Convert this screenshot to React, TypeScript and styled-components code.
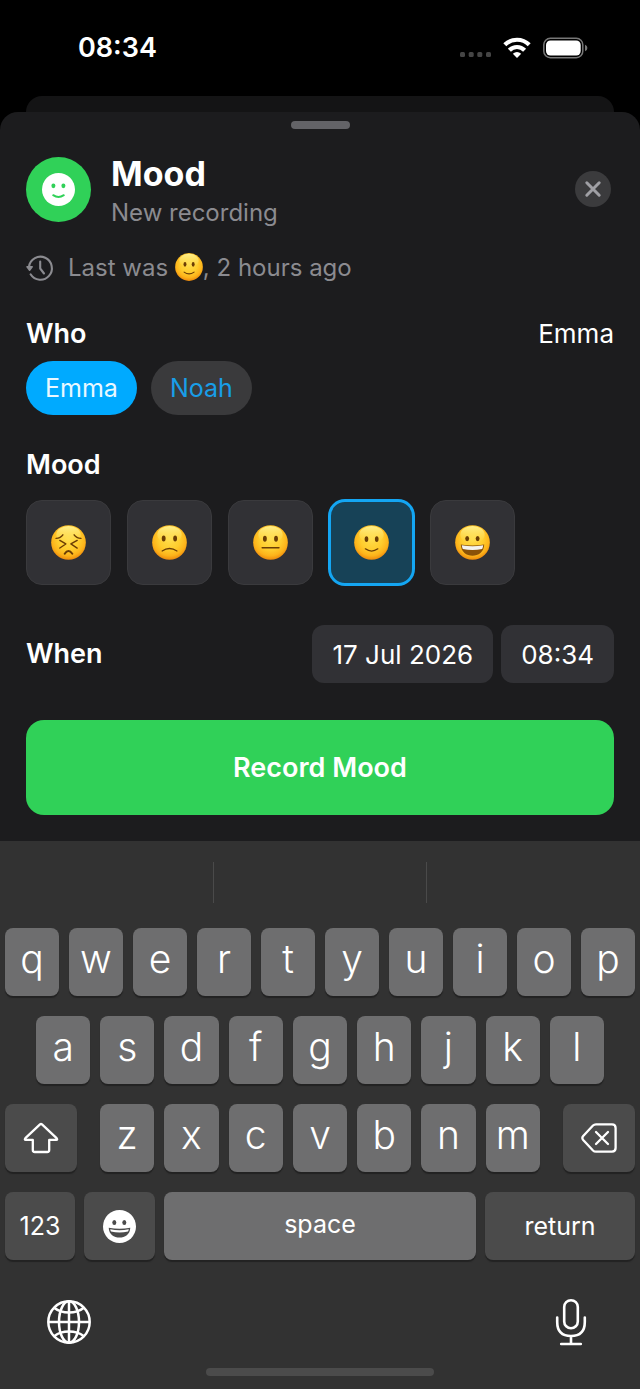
import React, {useId, useState} from "react";
import styled, {createGlobalStyle} from "styled-components";

type MoodId = "awful" | "sad" | "neutral" | "happy" | "great";

const moods: { id: MoodId; label: string }[] = [
    {id: "awful", label: "Awful"},
    {id: "sad", label: "Sad"},
    {id: "neutral", label: "Neutral"},
    {id: "happy", label: "Happy"},
    {id: "great", label: "Great"},
];

const people = ["Emma", "Noah"];

const faces: Record<MoodId, React.ReactNode> = {
    awful: (
        <g fill="none" stroke="#6b3d05" strokeWidth="1.4" strokeLinecap="round" strokeLinejoin="round">
            <path d="M5 13.2Q9.500 13 11.700 9.700M29.500 13.200Q25 13 22.800 9.700"/>
            <path d="M8.700 15.200L14.600 18.700L8.700 22.700M25.800 15.200L19.600 18.700L25.800 22.700"/>
            <path d="M13.500 28.300Q17.200 22.800 21 28.300" strokeWidth="2"/>
        </g>
    ),
    sad: (
        <>
            <ellipse cx="11.500" cy="13.300" rx="1.900" ry="3" fill="#6b3d05"/>
            <ellipse cx="22.800" cy="13.300" rx="1.900" ry="3" fill="#6b3d05"/>
            <path d="M10 25.600Q17.200 20.800 24.600 25.600" fill="none" stroke="#6b3d05" strokeWidth="1.300" strokeLinecap="round"/>
        </>
    ),
    neutral: (
        <>
            <ellipse cx="11.700" cy="13.500" rx="1.900" ry="3" fill="#6b3d05"/>
            <ellipse cx="22.700" cy="13.500" rx="1.900" ry="3" fill="#6b3d05"/>
            <path d="M9 22.400H25.600" stroke="#6b3d05" strokeWidth="1.400" strokeLinecap="round"/>
        </>
    ),
    happy: (
        <>
            <ellipse cx="12.300" cy="13.900" rx="1.800" ry="2.900" fill="#6b3d05"/>
            <ellipse cx="22.400" cy="13.900" rx="1.800" ry="2.900" fill="#6b3d05"/>
            <path d="M11.200 23.500Q17.300 28 23.500 23.500" fill="none" stroke="#6b3d05" strokeWidth="1.300" strokeLinecap="round"/>
        </>
    ),
    great: (
        <>
            <ellipse cx="12" cy="13.400" rx="1.900" ry="2.500" fill="#6b3d05"/>
            <ellipse cx="22.300" cy="13.400" rx="1.900" ry="2.500" fill="#6b3d05"/>
            <path d="M5.700 19.200Q17.200 21.200 28.800 19.200C28.600 26.500 23 30.300 17.200 30.300S5.900 26.500 5.700 19.200Z" fill="#8a5208"/>
            <path d="M6.700 20Q17.200 22 27.800 20Q27.600 22.300 26.800 23.700Q17.200 25.800 7.700 23.700Q6.900 22.300 6.700 20Z" fill="#f4f3ee"/>
        </>
    ),
};

const Emoji = ({mood, size}: { mood: MoodId; size: number }) => {
    const id = useId();
    return (
        <svg width={size} height={size} viewBox="0 0 34.500 34.500" aria-hidden="true">
            <defs>
                <radialGradient id={id} cx="0.500" cy="0.400" r="0.620">
                    <stop offset="0" stopColor="#ffdc4a"/>
                    <stop offset="0.500" stopColor="#ffcd2e"/>
                    <stop offset="0.780" stopColor="#fdb31a"/>
                    <stop offset="1" stopColor="#ea820a"/>
                </radialGradient>
                <linearGradient id={id + "top"} x1="0" y1="0" x2="0" y2="1">
                    <stop offset="0" stopColor="#fff08c"/>
                    <stop offset="1" stopColor="#ffe562" stopOpacity="0"/>
                </linearGradient>
            </defs>
            <circle cx="17.250" cy="17.250" r="17.100" fill={`url(#${id})`}/>
            <ellipse cx="17.250" cy="9.500" rx="12" ry="8.500" fill={`url(#${id}top)`}/>
            {faces[mood]}
        </svg>
    );
};

export default function App() {
    const [person, setPerson] = useState("Emma");
    const [mood, setMood] = useState<MoodId>("happy");

    return (
        <Screen>
            <GlobalStyle/>
            <StatusBar>
                <Clock>08:34</Clock>
                <StatusIcons/>
            </StatusBar>
            <BackCard/>
            <Sheet>
                <Grabber/>
                <Header>
                    <Badge>
                        <svg width="33" height="33" viewBox="0 0 33 33" aria-hidden="true">
                            <circle cx="16.500" cy="16.500" r="16.500" fill="#fff"/>
                            <ellipse cx="11.400" cy="12.800" rx="2" ry="2.400" fill="#30d158"/>
                            <ellipse cx="21.400" cy="12.800" rx="2" ry="2.400" fill="#30d158"/>
                            <path d="M11.200 22.200Q16.500 25.800 21.800 22.200" fill="none" stroke="#30d158" strokeWidth="2" strokeLinecap="round"/>
                        </svg>
                    </Badge>
                    <Heading>
                        <Title>Mood</Title>
                        <Subtitle>New recording</Subtitle>
                    </Heading>
                    <CloseButton aria-label="Close">
                        <svg width="36" height="36" viewBox="0 0 36 36" aria-hidden="true">
                            <circle cx="18" cy="18" r="18" fill="#3b3b3d"/>
                            <path d="M11.800 11.800L24.200 24.200M24.200 11.800L11.800 24.200" stroke="#a0a0a5" strokeWidth="3" strokeLinecap="round"/>
                        </svg>
                    </CloseButton>
                </Header>

                <LastEntry>
                    <svg width="28" height="28" viewBox="0 0 28 28" fill="none" stroke="#8b8b90" strokeWidth="2.100" strokeLinecap="round" strokeLinejoin="round" aria-hidden="true">
                        <path d="M3 12.600A11.500 11.500 0 1 1 4.600 20.300"/>
                        <path d="M14.200 7.600V14.500L18 19.500"/>
                        <path d="M1 12.800H6.200L3.600 16.200Z" fill="#8b8b90" strokeWidth="1.500"/>
                    </svg>
                    <LastText>Last was <Emoji mood="happy" size={28}/>, 2 hours ago</LastText>
                </LastEntry>

                <FieldHead>
                    <Label>Who</Label>
                    <Value>{person}</Value>
                </FieldHead>
                <Chips>
                    {people.map((name) => (
                        <Chip key={name} $active={name === person} aria-pressed={name === person} onClick={() => setPerson(name)}>
                            {name}
                        </Chip>
                    ))}
                </Chips>

                <MoodField>
                    <Legend>Mood</Legend>
                    <Tiles>
                        {moods.map(({id, label}) => (
                            <Tile key={id} $active={id === mood}>
                                <HiddenRadio type="radio" name="mood" aria-label={label} checked={id === mood} onChange={() => setMood(id)}/>
                                <Emoji mood={id} size={35}/>
                            </Tile>
                        ))}
                    </Tiles>
                </MoodField>

                <WhenRow>
                    <Label>When</Label>
                    <Pickers>
                        <Picker>17 Jul 2026</Picker>
                        <Picker>08:34</Picker>
                    </Pickers>
                </WhenRow>

                <RecordButton>Record Mood</RecordButton>
            </Sheet>
            <Keyboard/>
        </Screen>
    );
}

const StatusIcons = () => {
    return (
        <svg width="128" height="22" viewBox="0 0 128 22" aria-hidden="true">
            <g fill="#454545">
                <rect x="0" y="15" width="5" height="5" rx="1.500"/>
                <rect x="8.700" y="15" width="5" height="5" rx="1.500"/>
                <rect x="17.300" y="15" width="5" height="5" rx="1.500"/>
                <rect x="26" y="15" width="5" height="5" rx="1.500"/>
            </g>
            <g fill="none" stroke="#fff" strokeWidth="4.200">
                <path d="M44.800 7.800A17.300 17.300 0 0 1 69.200 7.800"/>
                <path d="M49.400 13.200A10.600 10.600 0 0 1 64.600 13.200"/>
            </g>
            <path d="M52.800 16.700Q57 13.300 61.200 16.700L57 21Z" fill="#fff"/>
            <rect x="83.800" y="1.300" width="39" height="19.400" rx="6.500" fill="none" stroke="#777" strokeWidth="1.500"/>
            <rect x="86" y="3.500" width="34.700" height="15" rx="4.500" fill="#fff"/>
            <path d="M125 7.800Q127.400 8.800 127.400 11T125 14.200Z" fill="#777"/>
        </svg>
    );
};

const Keyboard = () => {
    return (
        <KeyboardPanel>
            <Suggestions>
                <Suggestion/>
                <Suggestion/>
                <Suggestion/>
            </Suggestions>
            <KeyRows>
                <KeyRow>
                    {"qwertyuiop".split("").map((letter) => <LetterKey key={letter}>{letter}</LetterKey>)}
                </KeyRow>
                <KeyRow $inset>
                    {"asdfghjkl".split("").map((letter) => <LetterKey key={letter}>{letter}</LetterKey>)}
                </KeyRow>
                <ShiftRow>
                    <ActionKey aria-label="Shift">
                        <svg width="36" height="32" viewBox="0 0 36 32" fill="none" stroke="#fff" strokeWidth="2.300" strokeLinejoin="round" aria-hidden="true">
                            <path d="M17 2.400Q18 1.500 19 2.400L33.600 16.200Q34.800 17.700 33.200 17.900H26.200V28Q26.200 30 24.200 30H11.800Q9.800 30 9.800 28V17.900H2.800Q1.200 17.700 2.400 16.200Z"/>
                        </svg>
                    </ActionKey>
                    <LetterGroup>
                        {"zxcvbnm".split("").map((letter) => <LetterKey key={letter}>{letter}</LetterKey>)}
                    </LetterGroup>
                    <ActionKey aria-label="Delete">
                        <svg width="36" height="30" viewBox="0 0 36 30" fill="none" stroke="#fff" strokeWidth="2.300" strokeLinecap="round" strokeLinejoin="round" aria-hidden="true">
                            <path d="M15 1.300H31Q34.600 1.300 34.600 4.900V25.100Q34.600 28.700 31 28.700H15Q13.200 28.700 12 27.500L2.200 17Q0.500 15 2.200 13L12 2.500Q13.200 1.300 15 1.300Z"/>
                            <path d="M15 9L27 21M27 9L15 21"/>
                        </svg>
                    </ActionKey>
                </ShiftRow>
                <SpaceRow>
                    <ActionKey>123</ActionKey>
                    <ActionKey aria-label="Emoji">
                        <svg width="33" height="33" viewBox="0 0 33 33" aria-hidden="true">
                            <circle cx="16.500" cy="16.500" r="16.500" fill="#fff"/>
                            <ellipse cx="11.300" cy="12.400" rx="2" ry="2.500" fill="#4b4b4b"/>
                            <ellipse cx="21.300" cy="12.400" rx="2" ry="2.500" fill="#4b4b4b"/>
                            <path d="M5.700 17.700Q16.500 19.700 27.300 17.700C27 24.500 22 27.500 16.500 27.500S6 24.500 5.700 17.700Z" fill="#4b4b4b"/>
                            <path d="M7.200 19.300Q16.500 21 25.800 19.300Q25.600 20.600 25 21.600Q16.500 23.500 8 21.600Q7.400 20.600 7.200 19.300Z" fill="#fff"/>
                        </svg>
                    </ActionKey>
                    <SpaceKey>space</SpaceKey>
                    <ActionKey>return</ActionKey>
                </SpaceRow>
            </KeyRows>
            <KeyboardFooter>
                <FooterButton aria-label="Next keyboard">
                    <svg width="44" height="44" viewBox="0 0 44 44" fill="none" stroke="#fff" strokeWidth="2.500" aria-hidden="true">
                        <circle cx="22" cy="22" r="20.700"/>
                        <ellipse cx="22" cy="22" rx="10" ry="20.700"/>
                        <path d="M22 1.200V42.800M1.200 22H42.800"/>
                        <path d="M7.500 8Q13 12.500 22 12.500T36.500 8M7.500 36Q13 31.500 22 31.500T36.500 36"/>
                    </svg>
                </FooterButton>
                <FooterButton aria-label="Dictate">
                    <svg width="32" height="48" viewBox="0 0 32 48" fill="none" stroke="#fff" strokeWidth="2.600" strokeLinecap="round" aria-hidden="true">
                        <rect x="9.200" y="2.200" width="13.600" height="28" rx="6.800"/>
                        <path d="M2.200 19.500V24Q2.200 38 16 38T29.800 24V19.500M16 38V46M6.200 46H25.800"/>
                    </svg>
                </FooterButton>
            </KeyboardFooter>
            <HomeBar/>
        </KeyboardPanel>
    );
};

const GlobalStyle = createGlobalStyle`
  * {
    box-sizing: border-box;
  }

  body {
    margin: 0;
    background: #000;
    color: #fff;
    font-family: Inter, "Liberation Sans", sans-serif;
  }

  button {
    border: none;
    padding: 0;
    margin: 0;
    background: none;
    color: inherit;
    font-family: inherit;
    cursor: pointer;
  }

  svg {
    flex: none;
  }
`
const Screen = styled.div`
  display: flex;
  flex-direction: column;
  min-height: 100vh;
`
const StatusBar = styled.header`
  display: flex;
  align-items: center;
  justify-content: space-between;
  height: 96px;
  padding: 0 52px 0 78px;
`
const Clock = styled.span`
  font-size: 27px;
  line-height: 32px;
  font-weight: 600;
`
const BackCard = styled.div`
  height: 16px;
  margin: 0 26px;
  border-radius: 16px 16px 0 0;
  background: #141415;
`
const Sheet = styled.main`
  display: flex;
  flex-direction: column;
  padding: 9px 26px 26px;
  border-radius: 18px 18px 0 0;
  background: #1c1c1e;
`
const Grabber = styled.div`
  align-self: center;
  width: 59px;
  height: 8px;
  border-radius: 4px;
  background: #636367;
`
const Header = styled.div`
  display: flex;
  align-items: center;
  gap: 20px;
  margin-top: 21px;
`
const Badge = styled.div`
  display: flex;
  align-items: center;
  justify-content: center;
  width: 65px;
  height: 65px;
  border-radius: 50%;
  background: #30d158;
`
const Heading = styled.div`
  flex: 1;
`
const Title = styled.h1`
  margin: 0;
  font-size: 34px;
  line-height: 48px;
  font-weight: 700;
`
const Subtitle = styled.p`
  margin: 0;
  color: #8b8b90;
  font-size: 24px;
  line-height: 30px;
`
const CloseButton = styled.button`
  display: flex;
  justify-content: center;
  width: 42px;
`
const LastEntry = styled.div`
  display: flex;
  align-items: center;
  gap: 14px;
  margin-top: 20px;
  color: #8b8b90;
`
const LastText = styled.p`
  margin: 0;
  font-size: 24px;
  line-height: 40px;

  svg {
    vertical-align: -5px;
  }
`
const FieldHead = styled.div`
  display: flex;
  align-items: center;
  justify-content: space-between;
  margin-top: 28px;
`
const Label = styled.span`
  font-size: 27px;
  line-height: 36px;
  font-weight: 600;
`
const Value = styled.span`
  font-size: 26px;
  line-height: 36px;
`
const Chips = styled.div`
  display: flex;
  gap: 14px;
  margin-top: 9px;
`
const Chip = styled.button<{ $active: boolean }>`
  height: 54px;
  padding: 0 19px;
  border-radius: 27px;
  font-size: 25px;
  background: ${({$active}) => ($active ? "#00aaff" : "#3a3a3c")};
  color: ${({$active}) => ($active ? "#e9f8ff" : "#189ee8")};
`
const MoodField = styled.fieldset`
  margin: 32px 0 0;
  padding: 0;
  border: none;
`
const Legend = styled.legend`
  padding: 0;
  font-size: 27px;
  line-height: 36px;
  font-weight: 600;
`
const Tiles = styled.div`
  display: flex;
  gap: 16px;
  margin-top: 17px;
`
const Tile = styled.label<{ $active: boolean }>`
  display: flex;
  align-items: center;
  justify-content: center;
  width: 85px;
  height: 85px;
  border: ${({$active}) => ($active ? "2px solid #14a6f3" : "1px solid #3a3a3d")};
  border-radius: 16px;
  background: ${({$active}) => ($active ? "#174257" : "#313135")};
  box-shadow: ${({$active}) => ($active ? "0 0 0 1px #14a6f3" : "none")};
  cursor: pointer;
`
const HiddenRadio = styled.input`
  position: absolute;
  opacity: 0;
  pointer-events: none;
`
const WhenRow = styled.div`
  display: flex;
  align-items: center;
  justify-content: space-between;
  margin-top: 40px;
`
const Pickers = styled.div`
  display: flex;
  gap: 8px;
`
const Picker = styled.button`
  height: 58px;
  padding: 0 20px;
  border-radius: 12px;
  background: #313135;
  font-size: 26px;
`
const RecordButton = styled.button`
  height: 95px;
  margin-top: 37px;
  border-radius: 18px;
  background: #30d158;
  font-size: 27px;
  font-weight: 600;
`
const KeyboardPanel = styled.section`
  display: flex;
  flex: 1;
  flex-direction: column;
  padding: 21px 0 13px;
  background: #323232;
`
const Suggestions = styled.div`
  display: flex;
  height: 41px;
`
const Suggestion = styled.div`
  flex: 1;

  & + & {
    border-left: 1px solid #4a4a4a;
  }
`
const KeyRows = styled.div`
  display: flex;
  flex-direction: column;
  gap: 20px;
  margin-top: 25px;
  padding: 0 5px;
`
const KeyRow = styled.div<{ $inset?: boolean }>`
  display: flex;
  gap: 10px;
  padding: ${({$inset}) => ($inset ? "0 31px" : "0")};
`
const ShiftRow = styled.div`
  display: grid;
  grid-template-columns: 72fr 440fr 72fr;
  gap: 23px;
`
const LetterGroup = styled.div`
  display: flex;
  gap: 10px;
`
const SpaceRow = styled.div`
  display: grid;
  grid-template-columns: 70fr 71fr 312fr 150fr;
  gap: 9px;
`
const Key = styled.button`
  display: flex;
  align-items: center;
  justify-content: center;
  min-width: 0;
  height: 68px;
  border-radius: 8px;
  box-shadow: 0 2px 1px #222;
`
const LetterKey = styled(Key)`
  flex: 1;
  padding-bottom: 8px;
  background: #6e6e6f;
  font-size: 39px;
  font-weight: 300;
`
const ActionKey = styled(Key)`
  background: #4b4b4b;
  font-size: 25px;
`
const SpaceKey = styled(Key)`
  padding-bottom: 4px;
  background: #6e6e6f;
  font-size: 25px;
`
const KeyboardFooter = styled.div`
  display: flex;
  align-items: center;
  justify-content: space-between;
  margin-top: 38px;
  padding: 0 53px 0 47px;
`
const FooterButton = styled.button`
  display: flex;
`
const HomeBar = styled.div`
  align-self: center;
  width: 228px;
  height: 8px;
  margin-top: auto;
  border-radius: 4px;
  background: #4b4b4b;
`
